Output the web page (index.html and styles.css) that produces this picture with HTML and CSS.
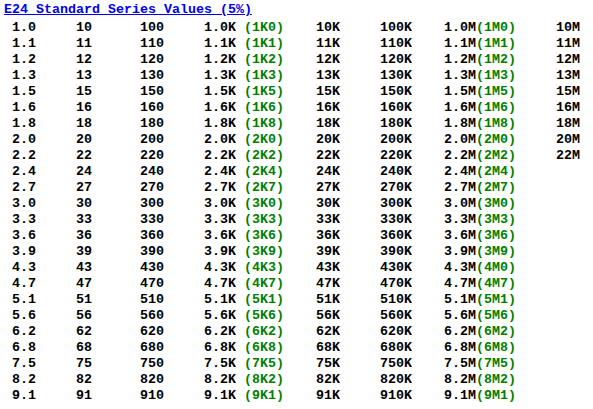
FILE: index.html
```html
<!DOCTYPE html>
<html>
<head>
<meta charset="utf-8">
<link rel="stylesheet" href="styles.css">
</head>
<body>
<div class="page">
<a class="title" href="#">E24 Standard Series Values (5%)</a>
<div class="table">
<div class="row"><span>1.0</span><span>10</span><span>100</span><span>1.0K <em>(1K0)</em></span><span>10K</span><span>100K</span><span>1.0M<em>(1M0)</em></span><span>10M</span></div>
<div class="row"><span>1.1</span><span>11</span><span>110</span><span>1.1K <em>(1K1)</em></span><span>11K</span><span>110K</span><span>1.1M<em>(1M1)</em></span><span>11M</span></div>
<div class="row"><span>1.2</span><span>12</span><span>120</span><span>1.2K <em>(1K2)</em></span><span>12K</span><span>120K</span><span>1.2M<em>(1M2)</em></span><span>12M</span></div>
<div class="row"><span>1.3</span><span>13</span><span>130</span><span>1.3K <em>(1K3)</em></span><span>13K</span><span>130K</span><span>1.3M<em>(1M3)</em></span><span>13M</span></div>
<div class="row"><span>1.5</span><span>15</span><span>150</span><span>1.5K <em>(1K5)</em></span><span>15K</span><span>150K</span><span>1.5M<em>(1M5)</em></span><span>15M</span></div>
<div class="row"><span>1.6</span><span>16</span><span>160</span><span>1.6K <em>(1K6)</em></span><span>16K</span><span>160K</span><span>1.6M<em>(1M6)</em></span><span>16M</span></div>
<div class="row"><span>1.8</span><span>18</span><span>180</span><span>1.8K <em>(1K8)</em></span><span>18K</span><span>180K</span><span>1.8M<em>(1M8)</em></span><span>18M</span></div>
<div class="row"><span>2.0</span><span>20</span><span>200</span><span>2.0K <em>(2K0)</em></span><span>20K</span><span>200K</span><span>2.0M<em>(2M0)</em></span><span>20M</span></div>
<div class="row"><span>2.2</span><span>22</span><span>220</span><span>2.2K <em>(2K2)</em></span><span>22K</span><span>220K</span><span>2.2M<em>(2M2)</em></span><span>22M</span></div>
<div class="row"><span>2.4</span><span>24</span><span>240</span><span>2.4K <em>(2K4)</em></span><span>24K</span><span>240K</span><span>2.4M<em>(2M4)</em></span><span></span></div>
<div class="row"><span>2.7</span><span>27</span><span>270</span><span>2.7K <em>(2K7)</em></span><span>27K</span><span>270K</span><span>2.7M<em>(2M7)</em></span><span></span></div>
<div class="row"><span>3.0</span><span>30</span><span>300</span><span>3.0K <em>(3K0)</em></span><span>30K</span><span>300K</span><span>3.0M<em>(3M0)</em></span><span></span></div>
<div class="row"><span>3.3</span><span>33</span><span>330</span><span>3.3K <em>(3K3)</em></span><span>33K</span><span>330K</span><span>3.3M<em>(3M3)</em></span><span></span></div>
<div class="row"><span>3.6</span><span>36</span><span>360</span><span>3.6K <em>(3K6)</em></span><span>36K</span><span>360K</span><span>3.6M<em>(3M6)</em></span><span></span></div>
<div class="row"><span>3.9</span><span>39</span><span>390</span><span>3.9K <em>(3K9)</em></span><span>39K</span><span>390K</span><span>3.9M<em>(3M9)</em></span><span></span></div>
<div class="row"><span>4.3</span><span>43</span><span>430</span><span>4.3K <em>(4K3)</em></span><span>43K</span><span>430K</span><span>4.3M<em>(4M0)</em></span><span></span></div>
<div class="row"><span>4.7</span><span>47</span><span>470</span><span>4.7K <em>(4K7)</em></span><span>47K</span><span>470K</span><span>4.7M<em>(4M7)</em></span><span></span></div>
<div class="row"><span>5.1</span><span>51</span><span>510</span><span>5.1K <em>(5K1)</em></span><span>51K</span><span>510K</span><span>5.1M<em>(5M1)</em></span><span></span></div>
<div class="row"><span>5.6</span><span>56</span><span>560</span><span>5.6K <em>(5K6)</em></span><span>56K</span><span>560K</span><span>5.6M<em>(5M6)</em></span><span></span></div>
<div class="row"><span>6.2</span><span>62</span><span>620</span><span>6.2K <em>(6K2)</em></span><span>62K</span><span>620K</span><span>6.2M<em>(6M2)</em></span><span></span></div>
<div class="row"><span>6.8</span><span>68</span><span>680</span><span>6.8K <em>(6K8)</em></span><span>68K</span><span>680K</span><span>6.8M<em>(6M8)</em></span><span></span></div>
<div class="row"><span>7.5</span><span>75</span><span>750</span><span>7.5K <em>(7K5)</em></span><span>75K</span><span>750K</span><span>7.5M<em>(7M5)</em></span><span></span></div>
<div class="row"><span>8.2</span><span>82</span><span>820</span><span>8.2K <em>(8K2)</em></span><span>82K</span><span>820K</span><span>8.2M<em>(8M2)</em></span><span></span></div>
<div class="row"><span>9.1</span><span>91</span><span>910</span><span>9.1K <em>(9K1)</em></span><span>91K</span><span>910K</span><span>9.1M<em>(9M1)</em></span><span></span></div>
</div>
</div>
</body>
</html>
```
FILE: styles.css
```css
html, body {
  margin: 0;
  padding: 0;
  background: #ffffff;
}

.page {
  padding: 2px 4px 0 4px;
  font-family: "Liberation Mono", "Courier New", monospace;
  font-weight: bold;
  font-size: 13.333px;
  line-height: 16px;
  color: #000000;
}

.title {
  display: block;
  width: max-content;
  color: #0000ee;
  text-decoration: underline;
  height: 16px;
}

.table {
  margin-top: 2px;
  padding-left: 8px;
}

.row {
  display: grid;
  grid-template-columns: 64px 64px 64px 112px 64px 64px 112px auto;
  height: 16px;
  white-space: pre;
}

.row em {
  font-style: normal;
  color: #008000;
}
```
